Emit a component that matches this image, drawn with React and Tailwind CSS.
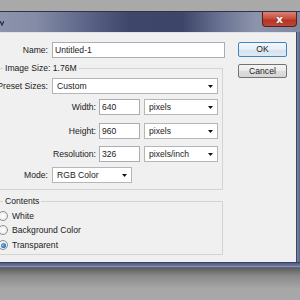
import React from 'react';

// small helpers for the dialog controls
function Field({ className, children }) {
  return (
    <div className={'h-[16px] bg-white border border-[#abadb3] flex items-center pl-[2px] shrink-0 ' + className}>
      {children}
    </div>
  );
}

function Select({ className, children }) {
  return (
    <div className={'h-[16px] bg-white border border-[#b4b6bc] flex items-center justify-between pl-[4px] pr-[4px] shrink-0 ' + className}>
      <span>{children}</span>
      <svg width="5" height="3" viewBox="0 0 5 3">
        <path d="M0 0H5L2.5 3Z" fill="#111" />
      </svg>
    </div>
  );
}

function Label({ className, children }) {
  return (
    <div className={'flex justify-end shrink-0 ' + className}>
      <span className="whitespace-nowrap">{children}</span>
    </div>
  );
}

function Radio({ checked, children, className }) {
  return (
    <div className={'flex items-center h-[12px] ' + className}>
      <div className="w-[10px] h-[10px] rounded-full border border-[#8f8f8f] bg-[radial-gradient(circle,#ffffff_0%,#e4e4e4_100%)] flex items-center justify-center shrink-0">
        {checked && <div className="w-[5px] h-[5px] rounded-full bg-[radial-gradient(circle_at_40%_40%,#7fc3f2_0%,#1d65b4_70%,#0d3f7a_100%)]" />}
      </div>
      <span className="ml-[4px] whitespace-nowrap">{children}</span>
    </div>
  );
}

export default function App() {
  return (
    <div className="w-[300px] h-[300px] overflow-hidden bg-[#a7a7a7] flex flex-col text-[8.6px] leading-[11px] text-[#1b1b1b] font-['Liberation_Sans',Arial,sans-serif]">
      <div className="h-[11px] shrink-0 bg-[#a9a9a9]" />

      {/* window */}
      <div className="ml-[-10px] w-[310px] flex flex-col shrink-0">
        {/* title bar */}
        <div className="h-[21px] border-t border-[#2e3447] bg-[linear-gradient(90deg,#8f96ae_0%,#838ba6_15%,#5a6386_32%,#3e4769_45%,#3d4668_62%,#6c7595_75%,#8d94ac_86%,#7f87a2_100%)] flex justify-between items-start">
          <svg className="ml-[10px] mt-[9px]" width="4" height="5" viewBox="0 0 4 5">
            <path d="M0 0L2 4L4 0" stroke="#1d2a52" strokeWidth="1.2" fill="none" />
          </svg>
          <div className="mr-[3px] w-[35px] h-[15px] rounded-b-[4px] border border-t-0 border-[#5b1e17] bg-[linear-gradient(180deg,#d98477_0%,#c9503f_45%,#b53524_60%,#b94a38_100%)] flex items-center justify-center">
            <span className="text-white font-bold text-[11px] leading-[11px] font-['DejaVu_Sans',sans-serif] [text-shadow:0_0_1px_#5b1e17]">x</span>
          </div>
        </div>

        {/* body */}
        <div className="h-[230px] flex">
          <div className="flex-1 bg-[#f0f0f0] pl-[10px] pt-[9px] flex border-t border-[#dfe2ea]">
            {/* form column */}
            <div className="w-[225px] flex flex-col shrink-0">
              <div className="flex items-center h-[16px]">
                <Label className="w-[48px]">Name:</Label>
                <Field className="ml-[4px] w-[173px]">Untitled-1</Field>
              </div>

              <div className="mt-[10px] ml-[-8px] w-[231px] h-[122px] border border-[#d3d3d3] pl-[7px] flex flex-col">
                <div className="-mt-[6px] ml-[3px] px-[2px] bg-[#f0f0f0] w-fit">Image Size: 1.76M</div>

                <div className="mt-[4px] flex items-center h-[16px]">
                  <Label className="w-[48px]">Preset Sizes:</Label>
                  <Select className="ml-[4px] w-[166px]">Custom</Select>
                </div>
                <div className="mt-[5px] flex items-center h-[16px]">
                  <Label className="w-[96px]">Width:</Label>
                  <Field className="ml-[3px] w-[41px]">640</Field>
                  <Select className="ml-[4px] w-[74px]">pixels</Select>
                </div>
                <div className="mt-[8px] flex items-center h-[16px]">
                  <Label className="w-[96px]">Height:</Label>
                  <Field className="ml-[3px] w-[41px]">960</Field>
                  <Select className="ml-[4px] w-[74px]">pixels</Select>
                </div>
                <div className="mt-[7px] flex items-center h-[16px]">
                  <Label className="w-[96px]">Resolution:</Label>
                  <Field className="ml-[3px] w-[41px]">326</Field>
                  <Select className="ml-[4px] w-[74px]">pixels/inch</Select>
                </div>
                <div className="mt-[5px] flex items-center h-[16px]">
                  <Label className="w-[48px]">Mode:</Label>
                  <Select className="ml-[4px] w-[80px]">RGB Color</Select>
                </div>
              </div>

              <div className="mt-[11px] ml-[-8px] w-[231px] h-[54px] border border-[#d3d3d3] pl-[5px] flex flex-col">
                <div className="-mt-[6px] ml-[5px] px-[2px] bg-[#f0f0f0] w-fit">Contents</div>
                <Radio className="mt-[3px]">White</Radio>
                <Radio className="mt-[2px]">Background Color</Radio>
                <Radio className="mt-[3px]" checked>Transparent</Radio>
              </div>
            </div>

            {/* buttons */}
            <div className="ml-[13px] w-[49px] flex flex-col shrink-0">
              <div className="h-[15px] rounded-[2px] border border-[#3d86c4] bg-[linear-gradient(180deg,#f3f8fc_0%,#e6eef5_50%,#d6e2ec_51%,#dfe9f2_100%)] flex items-center justify-center">OK</div>
              <div className="mt-[7px] h-[14px] rounded-[2px] border border-[#737373] bg-[linear-gradient(180deg,#f4f4f4_0%,#ebebeb_50%,#dddddd_51%,#d6d6d6_100%)] flex items-center justify-center">Cancel</div>
            </div>
          </div>
          <div className="w-[4px] border-l border-[#3e4666] bg-[linear-gradient(90deg,#7a83a1,#5c6589)]" />
        </div>

        {/* bottom frame */}
        <div className="h-[6px] border-t border-[#3a4161] bg-[linear-gradient(180deg,#4f5980_0%,#6a739a_50%,#8890ab_70%,#4a5172_100%)]" />
      </div>

      {/* shadow under the window */}
      <div className="h-[20px] shrink-0 bg-[linear-gradient(180deg,#5e5e5e_0%,#8a8a8a_40%,#a5a5a5_100%)]" />
    </div>
  );
}
